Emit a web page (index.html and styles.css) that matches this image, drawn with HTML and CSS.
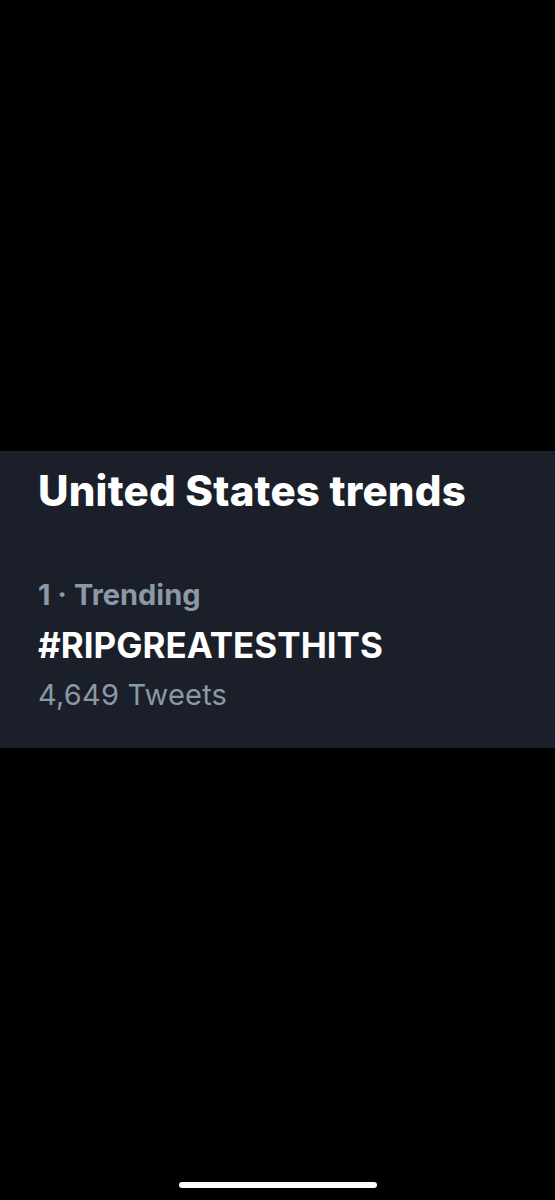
FILE: index.html
```html
<!DOCTYPE html>
<html lang="en">
<head>
<meta charset="utf-8">
<title>United States trends</title>
<link rel="stylesheet" href="styles.css">
</head>
<body>
<div class="screen">
  <section class="trends">
    <h1 class="trends-title">United States trends</h1>
    <div class="trend">
      <div class="trend-meta">1 · Trending</div>
      <div class="trend-name">#RIPGREATESTHITS</div>
      <div class="trend-count">4,649 Tweets</div>
    </div>
  </section>
  <div class="spacer"></div>
  <div class="home-bar"></div>
</div>
</body>
</html>
```
FILE: styles.css
```css
html, body {
  margin: 0;
  padding: 0;
  background: #000;
}
.screen {
  width: 555px;
  height: 1200px;
  display: flex;
  flex-direction: column;
  padding-top: 451px;
  box-sizing: border-box;
  font-family: Inter, "Noto Sans", sans-serif;
}
.trends {
  background: #1a1f29;
  height: 297px;
  box-sizing: border-box;
  padding: 18px 0 0 38px;
  display: flex;
  flex-direction: column;
}
.trends-title {
  margin: 0;
  font-size: 42px;
  line-height: 44px;
  font-weight: 800;
  color: #ffffff;
  letter-spacing: 0.2px;
}
.trend {
  margin-top: 57px;
  display: flex;
  flex-direction: column;
}
.trend-meta {
  font-size: 29px;
  line-height: 50px;
  font-weight: 700;
  color: #8b98a5;
}
.trend-name {
  font-size: 35px;
  line-height: 50px;
  font-weight: 700;
  color: #ffffff;
}
.trend-count {
  font-size: 29px;
  line-height: 50px;
  font-weight: 400;
  color: #8b98a5;
  letter-spacing: 0.2px;
}
.spacer {
  flex: 1;
}
.home-bar {
  align-self: center;
  width: 198px;
  height: 6px;
  border-radius: 3px;
  background: #ffffff;
  margin-bottom: 12px;
}
```
